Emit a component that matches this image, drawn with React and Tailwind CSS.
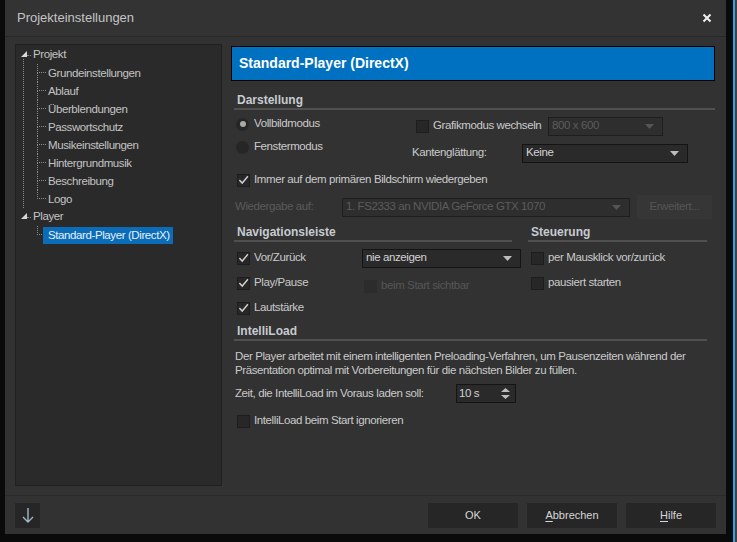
import React from "react";

const font = "font-['Liberation_Sans',Arial,sans-serif]";

const Check = ({ checked, disabled }) => (
  <span
    className={
      "w-[13px] h-[13px] shrink-0 flex items-center justify-center border " +
      (disabled ? "bg-[#2c2c2c] border-[#2c2c2c]" : "bg-[#272727] border-[#1d1d1d]")
    }
  >
    {checked && (
      <svg width="12" height="12" viewBox="0 0 12 12">
        <polyline points="1.5,6 4.6,9.3 10.8,2" fill="none" stroke="#cfcfcf" strokeWidth="1.6" />
      </svg>
    )}
  </span>
);

const Radio = ({ checked }) => (
  <span className="w-[13px] h-[13px] shrink-0 rounded-full bg-[#262626] flex items-center justify-center">
    {checked && <span className="w-[6px] h-[6px] rounded-full bg-[#a9a9a9]" />}
  </span>
);

const Arrow = ({ color = "#bdbdbd" }) => (
  <svg width="9" height="5" viewBox="0 0 9 5">
    <polygon points="0,0 9,0 4.5,5" fill={color} />
  </svg>
);

const Select = ({ value, width, disabled }) => (
  <div
    className={
      "h-[19px] shrink-0 flex items-center justify-between pl-[3px] pr-[8px] border whitespace-nowrap " +
      (disabled ? "border-[#1e1e1e] bg-[#2e2e2e] text-[#5c5c5c]" : "border-[#141414] bg-[#2a2a2a] text-[#d2d2d2]")
    }
    style={{ width }}
  >
    <span>{value}</span>
    <Arrow color={disabled ? "#555" : "#bdbdbd"} />
  </div>
);

const Header = ({ title, className = "" }) => (
  <div className={className}>
    <div className="pl-[3px] leading-[14px] text-[12px] tracking-normal font-bold text-[#c6cbd0]">{title}</div>
    <div className="mt-[1px] h-[2px] bg-[#505050]" />
  </div>
);

const Option = ({ checked, disabled, label, className = "" }) => (
  <div className={"flex items-center h-[18px] whitespace-nowrap " + className}>
    <Check checked={checked} disabled={disabled} />
    <span className={"ml-[4px] " + (disabled ? "text-[#565656]" : "")}>{label}</span>
  </div>
);

const TreeChild = ({ label, last, selected }) => (
  <div className="flex items-center h-[18px]">
    <div className="w-[9px] h-[18px] flex flex-col">
      <div className="h-[9px] border-l border-b border-dotted border-[#8a8a8a]" />
      {!last && <div className="flex-1 border-l border-dotted border-[#8a8a8a]" />}
    </div>
    <span
      className={
        "ml-[-3px] pl-[5px] pr-[3px] leading-[17px] whitespace-nowrap " +
        (selected ? "bg-[#0b6cb8] text-[#e6f0f8]" : "")
      }
    >
      {label}
    </span>
  </div>
);

const TreeParent = ({ label }) => (
  <div className="flex items-center h-[18px]">
    <svg width="6" height="6" viewBox="0 0 6 6" className="mt-[-2px]">
      <polygon points="6,0 6,6 0,6" fill="#d8d8d8" />
    </svg>
    <span className="w-[4px] border-t border-dotted border-[#8a8a8a]" />
    <span className="ml-[2px]">{label}</span>
  </div>
);

const Tree = () => {
  const items = [
    "Grundeinstellungen",
    "Ablauf",
    "Überblendungen",
    "Passwortschutz",
    "Musikeinstellungen",
    "Hintergrundmusik",
    "Beschreibung",
    "Logo",
  ];
  return (
    <div className="w-[207px] h-[442px] bg-[#2a2a2a] border border-[#202020] pl-[5px] pt-[1px] text-[#c3c3c3]">
      <TreeParent label="Projekt" />
      <div className="ml-[2px] border-l border-dotted border-[#8a8a8a] pl-[13px] mt-[-5px] pt-[5px]">
        {items.map((it, i) => (
          <TreeChild key={it} label={it} last={i === items.length - 1} />
        ))}
      </div>
      <TreeParent label="Player" />
      <div className="ml-[16px]">
        <TreeChild label="Standard-Player (DirectX)" last selected />
      </div>
    </div>
  );
};

const Content = () => (
  <div className="w-[484px] mt-[2px] text-[#cacaca]">
    <div className="h-[35px] bg-[#0070c0] border border-black flex items-center pl-[7px] text-[14px] tracking-normal font-bold text-white">
      Standard-Player (DirectX)
    </div>
    <div className="pl-[3px]">
      <Header title="Darstellung" className="mt-[12px]" />
      <div className="flex whitespace-nowrap">
        <div className="w-[178px] pl-[2px]">
          <div className="flex items-center h-[18px] mt-[5px]">
            <Radio checked />
            <span className="ml-[5px]">Vollbildmodus</span>
          </div>
          <div className="flex items-center h-[18px] mt-[5px]">
            <Radio />
            <span className="ml-[5px]">Fenstermodus</span>
          </div>
        </div>
        <div>
          <div className="flex items-center h-[18px] mt-[7px]">
            <div className="w-[136px] flex items-center pl-[4px]">
              <Check />
              <span className="ml-[4px]">Grafikmodus wechseln</span>
            </div>
            <Select value="800 x 600" width={115} disabled />
          </div>
          <div className="flex items-center h-[18px] mt-[9px]">
            <span className="w-[110px]">Kantenglättung:</span>
            <Select value="Keine" width={166} />
          </div>
        </div>
      </div>
      <Option checked label="Immer auf dem primären Bildschirm wiedergeben" className="mt-[9px] pl-[3px]" />
      <div className="flex items-center h-[24px] mt-[6px] whitespace-nowrap">
        <span className="w-[108px] pl-[1px] text-[#5a5a5a]">Wiedergabe auf:</span>
        <Select value="1. FS2333 an NVIDIA GeForce GTX 1070" width={288} disabled />
        <div className="ml-[7px] w-[75px] h-[24px] bg-[#363636] text-[#555] flex items-center justify-center">
          Erweitert...
        </div>
      </div>
      <div className="flex mt-[6px]">
        <Header title="Navigationsleiste" className="w-[278px]" />
        <Header title="Steuerung" className="ml-[16px] w-[179px]" />
      </div>
      <div className="flex mt-[7px]">
        <div className="w-[128px] pl-[3px] flex flex-col gap-[7px]">
          <Option checked label="Vor/Zurück" />
          <Option checked label="Play/Pause" />
          <Option checked label="Lautstärke" />
        </div>
        <div className="w-[158px] flex flex-col gap-[7px]">
          <div className="h-[18px] flex items-center">
            <Select value="nie anzeigen" width={159} />
          </div>
          <Option disabled label="beim Start sichtbar" className="pl-[2px] mt-[3px]" />
        </div>
        <div className="ml-[11px] flex flex-col gap-[7px]">
          <Option label="per Mausklick vor/zurück" />
          <Option label="pausiert starten" />
        </div>
      </div>
      <Header title="IntelliLoad" className="mt-[7px] w-[473px]" />
      <p className="mt-[8px] pl-[1px] leading-[14px] whitespace-nowrap">
        Der Player arbeitet mit einem intelligenten Preloading-Verfahren, um Pausenzeiten während der
        <br />
        Präsentation optimal mit Vorbereitungen für die nächsten Bilder zu füllen.
      </p>
      <div className="flex items-center h-[19px] mt-[7px] whitespace-nowrap">
        <span className="w-[222px] pl-[1px]">Zeit, die IntelliLoad im Voraus laden soll:</span>
        <div className="w-[60px] h-[19px] border border-[#141414] bg-[#2a2a2a] flex items-center justify-between pl-[2px] pr-[5px] text-[#d2d2d2]">
          <span>10 s</span>
          <svg width="9" height="13" viewBox="0 0 9 13">
            <polygon points="0,5 9,5 4.5,1" fill="#bdbdbd" />
            <polygon points="0,8 9,8 4.5,12" fill="#bdbdbd" />
          </svg>
        </div>
      </div>
      <Option label="IntelliLoad beim Start ignorieren" className="mt-[9px] pl-[3px]" />
    </div>
  </div>
);

const Button = ({ children }) => (
  <div className="w-[90px] h-[25px] bg-[#262626] flex items-center justify-center text-[#d6d6d6]">
    {children}
  </div>
);

export default function App() {
  return (
    <div
      className={
        "w-[737px] h-[542px] bg-[#0a0a0a] flex overflow-hidden text-[11.5px] tracking-[-0.4px] " + font
      }
    >
      <div className="ml-[5px] w-[721px] h-[534px] bg-[#323232] flex flex-col">
        <div className="h-[37px] shrink-0 border-b border-[#282828] flex items-center justify-between pl-[12px] pr-[14px] bg-[#333333]">
          <span className="text-[13px] tracking-normal text-[#c4c4c4]">Projekteinstellungen</span>
          <svg width="10" height="10" viewBox="0 0 10 10">
            <path d="M1.5 1.5 L8.5 8.5 M8.5 1.5 L1.5 8.5" stroke="#f0f0f0" strokeWidth="2" />
          </svg>
        </div>
        <div className="h-[458px] shrink-0 flex pl-[10px] pt-[7px]">
          <Tree />
          <div className="ml-[9px]">
            <Content />
          </div>
        </div>
        <div className="h-[39px] shrink-0 border-t border-[#2a2a2a] flex items-start pt-[7px] pl-[10px] pr-[10px]">
          <div className="w-[25px] h-[25px] bg-[#262626] flex items-center justify-center">
            <svg width="12" height="17" viewBox="0 0 12 17">
              <path d="M6 1 V15 M1 10 L6 15 L11 10" fill="none" stroke="#9fb8c9" strokeWidth="1.4" />
            </svg>
          </div>
          <div className="ml-auto flex gap-[9px] tracking-normal text-[11px]">
            <Button>OK</Button>
            <Button>
              <span className="underline underline-offset-2">A</span>bbrechen
            </Button>
            <Button>
              <span className="underline underline-offset-2">H</span>ilfe
            </Button>
          </div>
        </div>
      </div>
      <div className="ml-[7px] w-[2px] h-full bg-[#2aa6e6]" />
      <div className="w-[2px] h-full bg-[#4d3c3c]" />
    </div>
  );
}
